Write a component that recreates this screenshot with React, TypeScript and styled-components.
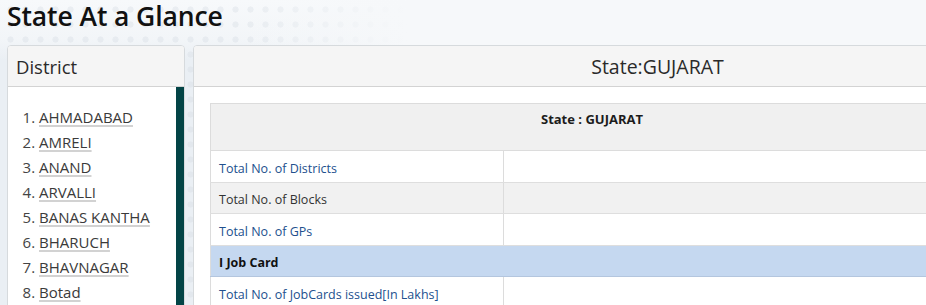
import React from "react";
import styled, { createGlobalStyle } from "styled-components";

const GlobalStyle = createGlobalStyle`
  html, body {
    margin: 0;
    padding: 0;
    overflow: hidden;
    background: #eaeff4;
  }
  body {
    font-family: "Open Sans", "Noto Sans", "DejaVu Sans", sans-serif;
    color: #222;
  }
`;

const Page = styled.div`
  width: 926px;
  height: 305px;
  overflow: hidden;
  padding: 0 0 0 7px;
  box-sizing: border-box;
  background-color: #eaeff4;
  background-image:
    linear-gradient(to right, rgba(246, 248, 250, 0) 0%, rgba(246, 248, 250, 0) 26%, rgba(246, 248, 250, 1) 44%),
    radial-gradient(circle, rgba(215, 221, 228, 0.4) 2.8px, rgba(215, 221, 228, 0) 3.4px),
    linear-gradient(to bottom, #f7f9fb 0%, #f2f5f8 40px, #eaeff4 60px);
  background-size: 100% 60px, 15px 15px, 100% 100%;
  background-repeat: no-repeat, repeat, no-repeat;
  background-position: 0 0, 3px 2px, 0 0;
`;

const Title = styled.h2`
  margin: 0 0 13px 0;
  font-size: 26.5px;
  line-height: 32px;
  font-weight: 600;
  color: #111;
  letter-spacing: -0.1px;
`;

const PanelRow = styled.div`
  display: flex;
  align-items: flex-start;
  gap: 8px;
`;

const Panel = styled.section<{ $width: number }>`
  flex: 0 0 auto;
  width: ${(p) => p.$width}px;
  box-sizing: border-box;
  background: #ffffff;
  border: 1px solid #d6dadd;
  border-radius: 4px;
  overflow: hidden;
`;

const PanelHeader = styled.div<{ $center?: boolean }>`
  height: 40px;
  display: flex;
  align-items: center;
  justify-content: ${(p) => (p.$center ? "center" : "flex-start")};
  padding: 0 8px;
  background: #f5f5f5;
  border-bottom: 1px solid #d3d3d3;
  font-size: ${(p) => (p.$center ? "19.5px" : "18.5px")};
  font-weight: ${(p) => (p.$center ? 400 : 500)};
  color: #2a2a2a;
`;

const ListBody = styled.div`
  display: flex;
  height: 300px;
`;

const DistrictList = styled.ol`
  flex: 1 1 auto;
  margin: 0;
  padding: 18px 0 0 31px;
  list-style: decimal;
  font-size: 15px;
  line-height: 25px;
  color: #444;
`;

const DistrictItem = styled.li`
  padding: 0;
`;

const DistrictLink = styled.a`
  color: #3a3a3a;
  text-decoration: underline;
  text-decoration-color: #d2d2d2;
  text-decoration-thickness: 2px;
  text-underline-offset: 2px;
  cursor: pointer;
`;

const ScrollThumb = styled.div`
  flex: 0 0 8px;
  background: #034446;
`;

const StateBody = styled.div`
  padding: 16px;
  height: 300px;
  box-sizing: border-box;
`;

const InfoTable = styled.table`
  width: 763px;
  border-collapse: collapse;
  font-size: 12.5px;
  border-left: 1px solid #dcdcdc;
  border-top: 1px solid #dcdcdc;
`;

const HeadCell = styled.th`
  padding: 5.5px 8px 22.5px;
  line-height: 18px;
  font-size: 13px;
  font-weight: 700;
  text-align: center;
  color: #1c1c1c;
  background: #f0f0f0;
  border-bottom: 1px solid #dcdcdc;
`;

const Row = styled.tr<{ $shade?: "white" | "grey" | "blue" }>`
  background: ${(p) =>
    p.$shade === "grey" ? "#f1f1f1" : p.$shade === "blue" ? "#c5d8f0" : "#ffffff"};
`;

const LabelCell = styled.td<{ $kind?: "link" | "plain" | "section" }>`
  width: 276px;
  padding: 8.5px 8px 5px;
  line-height: 17px;
  color: ${(p) => (p.$kind === "link" ? "#22508e" : p.$kind === "section" ? "#111" : "#333")};
  font-weight: ${(p) => (p.$kind === "section" ? 700 : 400)};
  border-bottom: 1px solid ${(p) => (p.$kind === "section" ? "#b4c6de" : "#dedede")};
  white-space: nowrap;
`;

const ValueCell = styled.td`
  padding: 8.5px 8px 5px;
  line-height: 17px;
  border-left: 1px solid #dcdcdc;
  border-bottom: 1px solid #dedede;
`;

const districts = [
  "AHMADABAD",
  "AMRELI",
  "ANAND",
  "ARVALLI",
  "BANAS KANTHA",
  "BHARUCH",
  "BHAVNAGAR",
  "Botad",
  "CHHOTAUDEPUR",
  "DANG",
];

type RowData = { label: string; kind: "link" | "plain" | "section"; shade: "white" | "grey" | "blue" };

const rows: RowData[] = [
  { label: "Total No. of Districts", kind: "link", shade: "white" },
  { label: "Total No. of Blocks", kind: "plain", shade: "grey" },
  { label: "Total No. of GPs", kind: "link", shade: "white" },
  { label: "I Job Card", kind: "section", shade: "blue" },
  { label: "Total No. of JobCards issued[In Lakhs]", kind: "link", shade: "white" },
  { label: "Total No. of Workers[In Lakhs]", kind: "link", shade: "grey" },
];

export default function App() {
  return (
    <>
      <GlobalStyle />
      <Page>
        <Title>State At a Glance</Title>
        <PanelRow>
          <Panel $width={178}>
            <PanelHeader>District</PanelHeader>
            <ListBody>
              <DistrictList>
                {districts.map((d) => (
                  <DistrictItem key={d}>
                    <DistrictLink>{d}</DistrictLink>
                  </DistrictItem>
                ))}
              </DistrictList>
              <ScrollThumb />
            </ListBody>
          </Panel>
          <Panel $width={929}>
            <PanelHeader $center>State:GUJARAT</PanelHeader>
            <StateBody>
              <InfoTable>
                <thead>
                  <tr>
                    <HeadCell colSpan={2}>State : GUJARAT</HeadCell>
                  </tr>
                </thead>
                <tbody>
                  {rows.map((r) =>
                    r.kind === "section" ? (
                      <Row key={r.label} $shade={r.shade}>
                        <LabelCell $kind="section" colSpan={2}>
                          {r.label}
                        </LabelCell>
                      </Row>
                    ) : (
                      <Row key={r.label} $shade={r.shade}>
                        <LabelCell $kind={r.kind}>{r.label}</LabelCell>
                        <ValueCell />
                      </Row>
                    )
                  )}
                </tbody>
              </InfoTable>
            </StateBody>
          </Panel>
        </PanelRow>
      </Page>
    </>
  );
}
